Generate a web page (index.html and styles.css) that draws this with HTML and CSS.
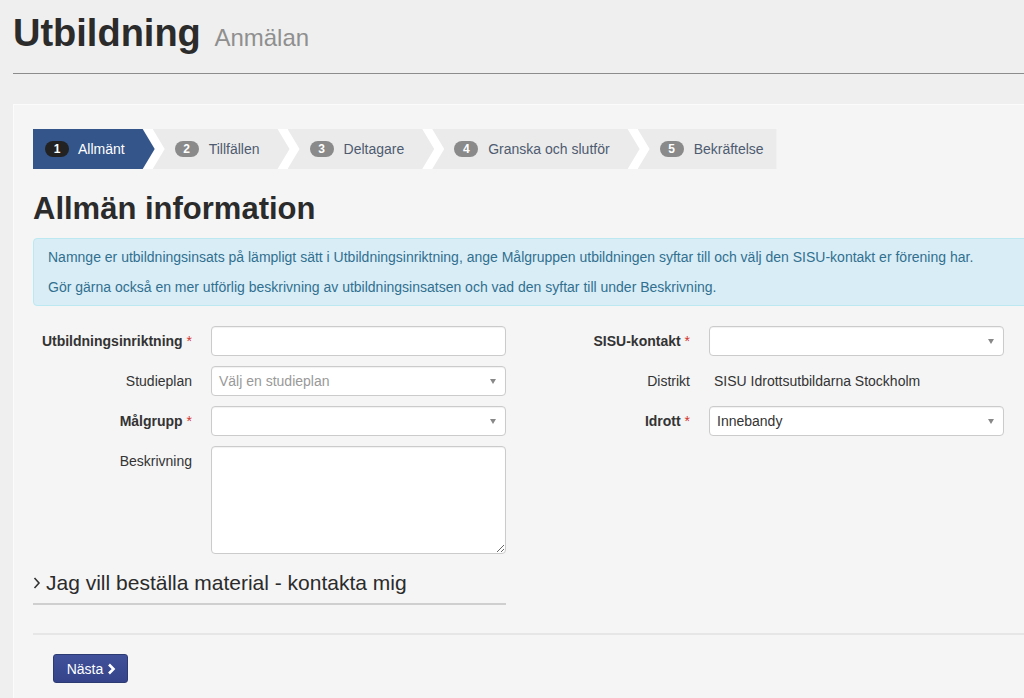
FILE: index.html
```html
<!DOCTYPE html>
<html lang="sv">
<head>
<meta charset="utf-8">
<title>Utbildning Anmälan</title>
<link rel="stylesheet" href="styles.css">
</head>
<body>
<header class="page-header">
  <h1>Utbildning <small>Anmälan</small></h1>
</header>

<main class="panel">
  <ol class="wizard">
    <li class="step active"><span class="badge">1</span>Allmänt</li>
    <li class="step"><span class="badge">2</span>Tillfällen</li>
    <li class="step"><span class="badge">3</span>Deltagare</li>
    <li class="step"><span class="badge">4</span>Granska och slutför</li>
    <li class="step"><span class="badge">5</span>Bekräftelse</li>
  </ol>

  <h2 class="section-title">Allmän information</h2>

  <div class="alert">
    <p>Namnge er utbildningsinsats på lämpligt sätt i Utbildningsinriktning, ange Målgruppen utbildningen syftar till och välj den SISU-kontakt er förening har.</p>
    <p>Gör gärna också en mer utförlig beskrivning av utbildningsinsatsen och vad den syftar till under Beskrivning.</p>
  </div>

  <div class="form">
    <div class="form-col">
      <div class="row">
        <label class="label req">Utbildningsinriktning <span class="star">*</span></label>
        <input class="control" type="text">
      </div>
      <div class="row">
        <label class="label">Studieplan</label>
        <div class="control select placeholder">Välj en studieplan<span class="caret"></span></div>
      </div>
      <div class="row">
        <label class="label req">Målgrupp <span class="star">*</span></label>
        <div class="control select"><span class="caret"></span></div>
      </div>
      <div class="row">
        <label class="label">Beskrivning</label>
        <textarea class="control textarea"></textarea>
      </div>
    </div>
    <div class="form-col">
      <div class="row">
        <label class="label req">SISU-kontakt <span class="star">*</span></label>
        <div class="control select"><span class="caret"></span></div>
      </div>
      <div class="row">
        <label class="label">Distrikt</label>
        <div class="static">SISU Idrottsutbildarna Stockholm</div>
      </div>
      <div class="row">
        <label class="label req">Idrott <span class="star">*</span></label>
        <div class="control select">Innebandy<span class="caret"></span></div>
      </div>
    </div>
  </div>

  <div class="collapse-head">
    <svg class="chev" width="8" height="14" viewBox="0 0 8 14"><polyline points="1.5,2 6,7 1.5,12" fill="none" stroke="#333" stroke-width="1.6"/></svg>
    <span>Jag vill beställa material - kontakta mig</span>
  </div>

  <div class="footer">
    <button class="btn" type="button">Nästa
      <svg width="9" height="12" viewBox="0 0 9 12"><polyline points="2,1.5 6.5,6 2,10.5" fill="none" stroke="#fff" stroke-width="2.6"/></svg>
    </button>
  </div>
</main>
</body>
</html>
```

FILE: styles.css
```css
html, body {
  overflow: hidden;
}
body {
  margin: 0;
  background: #efefef;
  font-family: "Liberation Sans", Arial, sans-serif;
  color: #333;
  width: 1200px;
}
.page-header {
  margin-left: 13px;
  padding-bottom: 14px;
  border-bottom: 1px solid #8c8c8c;
}
.page-header h1 {
  margin: 12px 0 0;
  font-size: 38px;
  line-height: 42px;
  font-weight: bold;
  color: #2b2b2b;
}
.page-header small {
  font-size: 24px;
  font-weight: normal;
  color: #8f8f8f;
  margin-left: 3px;
}
.panel {
  display: block;
  margin: 30px 0 0 13px;
  width: 1140px;
  background: #f5f5f5;
  border: 1px solid #fbfbfb;
  padding: 24px 19px 40px;
}

/* wizard */
.wizard {
  display: inline-flex;
  list-style: none;
  margin: 0;
  padding: 0;
  height: 40px;
  background: #fff;
}
.step {
  display: flex;
  align-items: center;
  gap: 10px;
  height: 40px;
  background: #ebebeb;
  color: #4e5b70;
  font-size: 14px;
  padding: 0 30px 0 22px;
  margin-left: -2px;
  white-space: nowrap;
  clip-path: polygon(0 0, calc(100% - 12px) 0, 100% 50%, calc(100% - 12px) 100%, 0 100%, 12px 50%);
}
.step:first-child {
  margin-left: 0;
  padding-left: 12px;
  gap: 9px;
  clip-path: polygon(0 0, calc(100% - 12px) 0, 100% 50%, calc(100% - 12px) 100%, 0 100%);
}
.step:last-child {
  padding-right: 13px;
  clip-path: polygon(0 0, 100% 0, 100% 100%, 0 100%, 12px 50%);
}
.step.active {
  background: #34558a;
  color: #fff;
}
.badge {
  display: inline-block;
  width: 24px;
  height: 16px;
  line-height: 16px;
  border-radius: 8px;
  background: #8a8a8a;
  color: #fff;
  font-size: 12px;
  font-weight: bold;
  text-align: center;
}
.step.active .badge {
  background: #222;
}

.section-title {
  margin: 22px 0 12px;
  font-size: 31px;
  line-height: 35px;
  font-weight: bold;
  color: #2b2b2b;
}

.alert {
  background: #d9edf7;
  border: 1px solid #bce8f1;
  border-radius: 4px;
  color: #31708f;
  font-size: 14px;
  line-height: 20px;
  padding: 8px 14px 8px;
}
.alert p {
  margin: 0 0 10px;
}
.alert p:last-child {
  margin: 0;
}

/* form */
.form {
  display: grid;
  grid-template-columns: 473px 473px;
  column-gap: 25px;
  margin-top: 20px;
  align-items: start;
}
.form-col {
  display: flex;
  flex-direction: column;
  gap: 10px;
}
.row {
  display: grid;
  grid-template-columns: 159px 295px;
  column-gap: 19px;
  align-items: start;
}
.label {
  text-align: right;
  font-size: 14px;
  line-height: 30px;
  color: #333;
}
.label.req {
  font-weight: bold;
}
.star {
  color: #d2322d;
  font-weight: normal;
}
.control {
  box-sizing: border-box;
  height: 30px;
  width: 295px;
  margin: 0;
  background: #fff;
  border: 1px solid #cbcbcb;
  border-radius: 4px;
  box-shadow: inset 0 1px 1px rgba(0,0,0,0.06);
  font-family: "Liberation Sans", Arial, sans-serif;
  font-size: 14px;
  color: #333;
  padding: 0 7px;
}
.select {
  position: relative;
  line-height: 28px;
}
.select.placeholder {
  color: #999;
}
.caret {
  position: absolute;
  right: 9px;
  top: 12px;
  width: 0;
  height: 0;
  border-left: 3.5px solid transparent;
  border-right: 3.5px solid transparent;
  border-top: 5px solid #888;
}
.textarea {
  height: 108px;
  resize: both;
  padding: 6px 7px;
  display: block;
}
.static {
  font-size: 14px;
  line-height: 30px;
  padding-left: 5px;
  color: #333;
}

.collapse-head {
  display: flex;
  align-items: center;
  gap: 5px;
  width: 473px;
  margin-top: 15px;
  padding-bottom: 6px;
  border-bottom: 2px solid #cfcfcf;
  font-size: 21px;
  line-height: 28px;
  color: #2b2b2b;
}
.chev {
  display: block;
}

.footer {
  margin-top: 28px;
  border-top: 2px solid #e6e6e6;
  padding: 19px 20px 0;
}
.btn {
  display: inline-flex;
  align-items: center;
  gap: 4px;
  height: 29px;
  width: 75px;
  justify-content: center;
  padding: 0 0 0 2px;
  border: 1px solid #2d3b73;
  border-radius: 3px;
  background: linear-gradient(#40509a, #35448a);
  color: #fff;
  font-family: "Liberation Sans", Arial, sans-serif;
  font-size: 14px;
  cursor: pointer;
}
```
